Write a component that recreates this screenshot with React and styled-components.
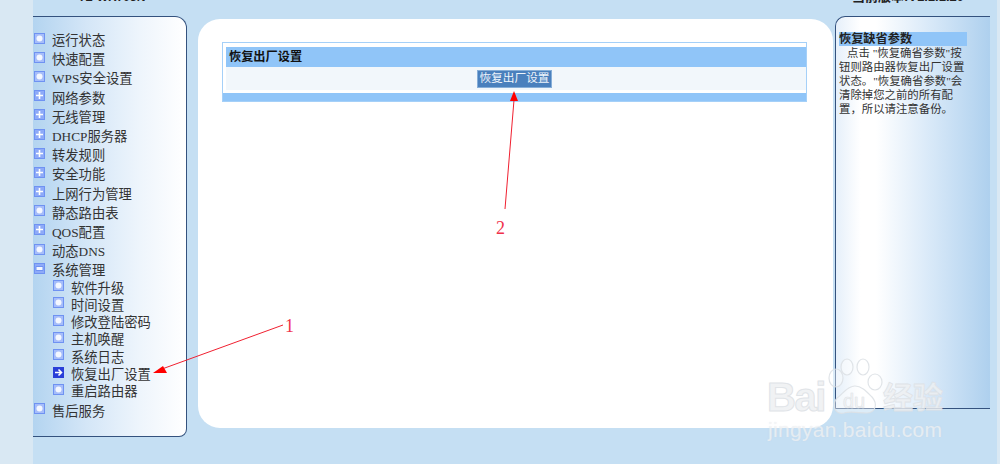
import React from 'react';
import styled, { createGlobalStyle } from 'styled-components';

const Global = createGlobalStyle`
    html, body { margin: 0; padding: 0; }
    body { font-family: "Liberation Serif", "Noto Sans CJK SC", serif; }
`

const Page = styled.div`
    position: relative;
    display: flex;
    width: 1000px;
    height: 464px;
    overflow: hidden;
    background: #c5dff3;
`
const Gutter = styled.div`
    flex: none;
    width: ${p => p.$w}px;
    margin-left: ${p => p.$ml || 0}px;
    background: #d9e8f3;
`
const Column = styled.div`
    flex: none;
    display: flex;
    flex-direction: column;
    width: ${p => p.$w}px;
    margin-left: ${p => p.$ml || 0}px;
`
const Caption = styled.div`
    flex: none;
    height: 16px;
    overflow: hidden;
    display: flex;
    align-items: flex-end;
    padding-left: ${p => p.$pl}px;
    box-sizing: border-box;
    padding-bottom: 12px;
    font-family: "Liberation Sans", "Noto Sans CJK SC", sans-serif;
    font-size: ${p => p.$size}px;
    line-height: 14px;
    font-weight: bold;
    color: #222;
    white-space: nowrap;
`
const Side = styled.div`
    box-sizing: border-box;
    height: 421px;
    padding-top: 13px;
    border: 1px solid #34527e;
    border-left: 0;
    border-radius: 0 12px 8px 0;
    background: linear-gradient(90deg, #b3d4f0 0%, #d4e6f7 35%, #eef5fc 70%, #ffffff 100%);
`
const Menu = styled.ul`
    list-style: none;
    margin: 0;
    padding: 0;
`
const Item = styled.li`
    display: flex;
    align-items: center;
    height: ${p => (p.$sub ? 17.3 : 19.2)}px;
    margin-top: ${p => (p.$first ? -1 : 0)}px;
    padding-left: ${p => (p.$sub ? 20 : 1)}px;
    font-size: 13.3px;
    color: #333;
    white-space: nowrap;
    &:last-child { margin-top: 1px; }
`
const Label = styled.span`
    margin-left: 7px;
`
const IconBox = styled.svg`
    flex: none;
    margin-bottom: 3px;
`
const Main = styled.div`
    flex: none;
    box-sizing: border-box;
    width: 635px;
    height: 409px;
    margin: 19px 0 0 11px;
    padding: 23px 26px 0 24px;
    border-radius: 22px;
    background: #ffffff;
`
const Table = styled.div`
    box-sizing: border-box;
    height: 60px;
    padding: 4px 0 0 3px;
    border: 1px solid #a5d0f8;
    background: linear-gradient(#ffffff 50px, #90c5f8 50px);
`
const TableHead = styled.div`
    height: 20px;
    padding-left: 3px;
    font-size: 12.2px;
    line-height: 20px;
    font-weight: bold;
    color: #111;
    background: #90c5f8;
`
const TableRow = styled.div`
    display: flex;
    justify-content: center;
    align-items: center;
    height: 23px;
    padding-right: 3px;
    background: #f2f7fb;
`
const ResetButton = styled.div`
    box-sizing: border-box;
    width: 75px;
    height: 18px;
    text-align: center;
    font-size: 11.7px;
    line-height: 16px;
    white-space: nowrap;
    color: #eef4fb;
    background: #4a80bd;
    border: 1px solid #86aed8;
`
const Help = styled.div`
    box-sizing: border-box;
    height: 393px;
    padding: 15px 0 0 3px;
    border-top: 1px solid #34527e;
    border-left: 1px solid #34527e;
    border-bottom: 1px solid #34527e;
    border-radius: 10px 0 0 0;
    background: linear-gradient(90deg, #e6f0fa 0%, #ffffff 16%, #ffffff 26%, #dcebf9 58%, #aed0ee 100%);
`
const HelpTitle = styled.div`
    width: 128px;
    height: 14px;
    font-size: 12.2px;
    line-height: 14px;
    font-weight: bold;
    color: #222;
    background: #90c5f8;
`
const HelpText = styled.p`
    margin: 0;
    font-size: 11.4px;
    line-height: 14px;
    color: #333;
    white-space: nowrap;
`
const Indent = styled.span`
    display: inline-block;
    width: 8px;
`
const Overlay = styled.svg`
    position: absolute;
    left: 0;
    top: 0;
    pointer-events: none;
`
const Mark = styled.div`
    position: absolute;
    left: ${p => p.$x}px;
    top: ${p => p.$y}px;
    font-family: "Liberation Sans", "Noto Sans CJK SC", sans-serif;
    font-size: ${p => p.$size}px;
    line-height: 1;
    font-weight: ${p => p.$weight || 400};
    letter-spacing: ${p => p.$ls || 0}px;
    color: rgba(255, 255, 255, 0.55);
    -webkit-text-stroke: ${p => p.$stroke || 0}px rgba(222, 226, 230, 0.9);
    text-shadow: 0 0 1px rgba(205, 210, 216, 0.6);
    white-space: nowrap;
`
const Note = styled.div`
    position: absolute;
    left: ${p => p.$x}px;
    top: ${p => p.$y}px;
    font-size: 18px;
    line-height: 1;
    color: #f0304a;
`

const Icon = ({ type }) => {
    const fill = type === 'current' ? '#2a3fd8' : '#6f92f2';
    return (
        <IconBox width="11" height="11" viewBox="0 0 11 11">
            <rect width="11" height="11" fill={fill} />
            {type !== 'current' && <rect x="1" y="1" width="9" height="9" fill={type === 'dot' ? '#a6bdfa' : '#8eaaf8'} />}
            {type === 'dot' && <circle cx="5.5" cy="5.5" r="3" fill="#f4f7ff" />}
            {type === 'plus' && <path d="M2 5.5h7M5.5 2v7" stroke="#ffffff" strokeWidth="1.6" />}
            {type === 'minus' && <path d="M2 3.5h7v4H2z" fill="#f4f7ff" stroke="#6f92f2" strokeWidth="1" />}
            {type === 'current' && <path d="M2 5.5h6M5.5 2.5l3 3-3 3" fill="none" stroke="#fff" strokeWidth="1.6" />}
        </IconBox>
    );
};

const menu = [
    ['dot', '运行状态'],
    ['dot', '快速配置'],
    ['dot', 'WPS安全设置'],
    ['plus', '网络参数'],
    ['plus', '无线管理'],
    ['plus', 'DHCP服务器'],
    ['plus', '转发规则'],
    ['plus', '安全功能'],
    ['plus', '上网行为管理'],
    ['dot', '静态路由表'],
    ['plus', 'QOS配置'],
    ['dot', '动态DNS'],
    ['minus', '系统管理'],
    ['dot', '软件升级', true],
    ['dot', '时间设置', true],
    ['dot', '修改登陆密码', true],
    ['dot', '主机唤醒', true],
    ['dot', '系统日志', true],
    ['current', '恢复出厂设置', true],
    ['dot', '重启路由器', true],
    ['dot', '售后服务'],
];

const Annotations = () => (
    <Overlay width="1000" height="464" viewBox="0 0 1000 464">
        <path d="M283 325L162 369" stroke="#f02030" strokeWidth="1" fill="none" />
        <path d="M153 373L163 366L167 373Z" fill="#ff0000" />
        <path d="M505 209L514 100" stroke="#f02030" strokeWidth="1" fill="none" />
        <path d="M514 91L510 101L518 101Z" fill="#ff0000" />
        {/* paw of the watermark */}
        <g fill="#ffffff" fillOpacity="0.4" stroke="#dde1e6" strokeOpacity="0.9" strokeWidth="1.2">
            <ellipse cx="836" cy="378" rx="7" ry="9" />
            <ellipse cx="847" cy="367" rx="6" ry="8" />
            <ellipse cx="863" cy="367" rx="6" ry="8" />
            <ellipse cx="875" cy="382" rx="7" ry="8" />
            <path d="M855 386c7 0 12 6 17 11 6 7 4 16-6 16-7 0-15-2-22 0-9 2-13-8-7-15 6-4 10-12 18-12z" />
        </g>
    </Overlay>
);

export default function App() {
    return (
        <Page>
            <Global />
            <Gutter $w={33} />
            <Column $w={154}>
                <Caption $pl={45} $size={12}>TL-WR703N</Caption>
                <Side>
                    <Menu>
                        {menu.map(([type, text, sub]) => (
                            <Item key={text} $sub={sub} $first={text === '软件升级'}>
                                <Icon type={type} />
                                <Label>{text}</Label>
                            </Item>
                        ))}
                    </Menu>
                </Side>
            </Column>
            <Main>
                <Table>
                    <TableHead>恢复出厂设置</TableHead>
                    <TableRow>
                        <ResetButton>恢复出厂设置</ResetButton>
                    </TableRow>
                </Table>
            </Main>
            <Column $w={155} $ml={2}>
                <Caption $pl={17} $size={13}>当前版本:V1.1.1.20</Caption>
                <Help>
                    <HelpTitle>恢复缺省参数</HelpTitle>
                    <HelpText>
                        <Indent />点击 "恢复确省参数"按<br />
                        钮则路由器恢复出厂设置<br />
                        状态。"恢复确省参数"会<br />
                        清除掉您之前的所有配<br />
                        置，所以请注意备份。
                    </HelpText>
                </Help>
            </Column>
            <Gutter $w={3} $ml={7} />
            <Annotations />
            <Note $x={285} $y={317}>1</Note>
            <Note $x={496} $y={219}>2</Note>
            <Mark $x={767} $y={377} $size={40} $weight={700} $ls={-1.5} $stroke={1}>Bai</Mark>
            <Mark $x={843} $y={391} $size={20} $stroke={0.5}>du</Mark>
            <Mark $x={883} $y={383} $size={30} $weight={700} $stroke={0.8}>经验</Mark>
            <Mark $x={768} $y={419} $size={21} $ls={0.3}>jingyan.baidu.com</Mark>
        </Page>
    );
}
